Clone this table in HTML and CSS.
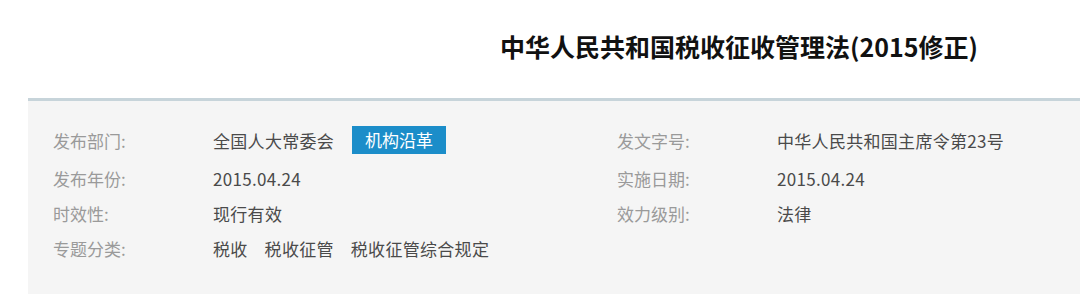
FILE: index.html
```html
<!DOCTYPE html>
<html lang="zh-CN">
<head>
<meta charset="utf-8">
<title>中华人民共和国税收征收管理法(2015修正)</title>
<link rel="stylesheet" href="styles.css">
</head>
<body>
<header class="head">
  <h1 class="title">中华人民共和国税收征收管理法(2015修正)</h1>
</header>
<section class="info">
  <div class="grid">
    <div class="row">
      <span class="label">发布部门:</span>
      <span class="value">全国人大常委会<a class="badge">机构沿革</a></span>
    </div>
    <div class="row">
      <span class="label">发文字号:</span>
      <span class="value">中华人民共和国主席令第23号</span>
    </div>
    <div class="row">
      <span class="label">发布年份:</span>
      <span class="value">2015.04.24</span>
    </div>
    <div class="row">
      <span class="label">实施日期:</span>
      <span class="value">2015.04.24</span>
    </div>
    <div class="row">
      <span class="label">时效性:</span>
      <span class="value">现行有效</span>
    </div>
    <div class="row">
      <span class="label">效力级别:</span>
      <span class="value">法律</span>
    </div>
    <div class="row">
      <span class="label">专题分类:</span>
      <span class="value"><span class="tag">税收</span><span class="tag">税收征管</span><span class="tag">税收征管综合规定</span></span>
    </div>
  </div>
</section>
</body>
</html>
```

FILE: styles.css
```css
html, body {
  margin: 0;
  padding: 0;
  background: #ffffff;
  font-family: "Noto Sans CJK SC", "Noto Sans", sans-serif;
}

.head {
  height: 98px;
  box-sizing: border-box;
  padding: 0 0 6px 398px;
  display: flex;
  align-items: center;
  justify-content: center;
}

.title {
  margin: 0;
  font-size: 25px;
  font-weight: bold;
  color: #111111;
  line-height: 32px;
  white-space: nowrap;
}

.info {
  margin-left: 28px;
  border-top: 3px solid #c7d4da;
  background: #f5f5f5;
  min-height: 200px;
  box-sizing: border-box;
  padding: 18px 0 0 25px;
}

.grid {
  display: grid;
  grid-template-columns: 564px 1fr;
}

.row {
  display: flex;
  align-items: center;
  min-height: 35px;
  font-size: 17px;
}

.label {
  width: 160px;
  flex: none;
  color: #9a9a9a;
}

.value {
  color: #4a4a4a;
  display: flex;
  align-items: center;
  white-space: nowrap;
  letter-spacing: 0.3px;
}

.badge {
  display: inline-block;
  margin: 7px 0 7px 18px;
  height: 28px;
  line-height: 28px;
  padding: 0 13px;
  background: #1b8dc9;
  color: #ffffff;
  font-size: 17px;
  letter-spacing: 0;
}

.tag {
  margin-right: 17px;
}
```
